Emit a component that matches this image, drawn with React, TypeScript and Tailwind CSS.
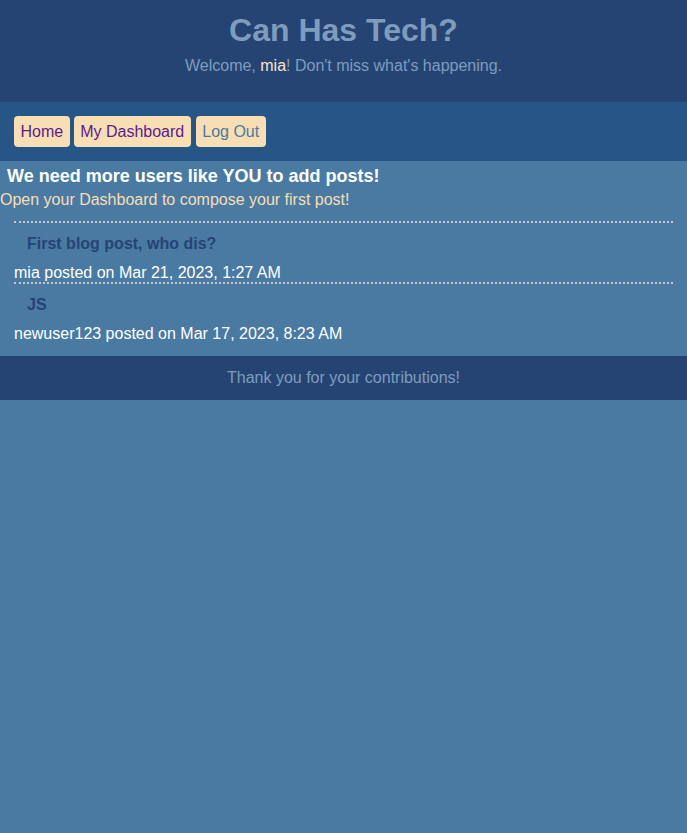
const posts = [
  { title: "First blog post, who dis?", author: "mia", date: "Mar 21, 2023, 1:27 AM" },
  { title: "JS", author: "newuser123", date: "Mar 17, 2023, 8:23 AM" },
];

const App = () => {
  return (
    <div className="min-h-screen bg-[#4a7aa2] font-['Liberation_Sans',Arial,sans-serif]">
      <header className="bg-[#254474] pt-[12px] pb-[27px] text-center">
        <h1 className="h-[37px] text-[32px] leading-[37px] font-bold text-[#7f9cbd]">
          Can Has Tech?
        </h1>
        <p className="mt-[8px] text-[16px] leading-[18px] text-[#7f9cbd]">
          Welcome, <span className="text-[#fbe5c8]">mia</span>! Don't miss what's happening.
        </p>
      </header>

      <nav className="flex gap-[4px] bg-[#275586] px-[14px] py-[14px]">
        <a className="h-[31px] rounded-[4px] bg-[#f7deb5] px-[6.5px] text-[16px] leading-[31px] text-[#5b1c8a]">
          Home
        </a>
        <a className="h-[31px] rounded-[4px] bg-[#f7deb5] px-[6.5px] text-[16px] leading-[31px] text-[#5b1c8a]">
          My Dashboard
        </a>
        <a className="ml-[1px] h-[31px] rounded-[4px] bg-[#f7deb5] px-[6.5px] text-[16px] leading-[31px] text-[#4a7aa2]">
          Log Out
        </a>
      </nav>

      <main className="pt-[4px] pb-[13px]">
        <h3 className="pl-[7px] text-[18px] leading-[22px] font-bold text-white">
          We need more users like YOU to add posts!
        </h3>
        <p className="mt-[4px] text-[16px] leading-[18px] text-[#f7deb5]">
          Open your Dashboard to compose your first post!
        </p>
        <div className="mx-[14px] mt-[12px]">
          {posts.map((p) => (
            <div key={p.title} className="border-t-2 border-dotted border-[#c8c8c8]">
              <h4 className="mt-[12px] pl-[13px] text-[16px] leading-[18px] font-bold text-[#254474]">
                {p.title}
              </h4>
              <p className="mt-[11px] text-[16px] leading-[18px] text-white">
                {p.author} posted on {p.date}
              </p>
            </div>
          ))}
        </div>
      </main>

      <footer className="bg-[#254474] py-[13px] text-center text-[16px] leading-[18px] text-[#7f9cbd]">
        Thank you for your contributions!
      </footer>
    </div>
  );
};

export default App;
